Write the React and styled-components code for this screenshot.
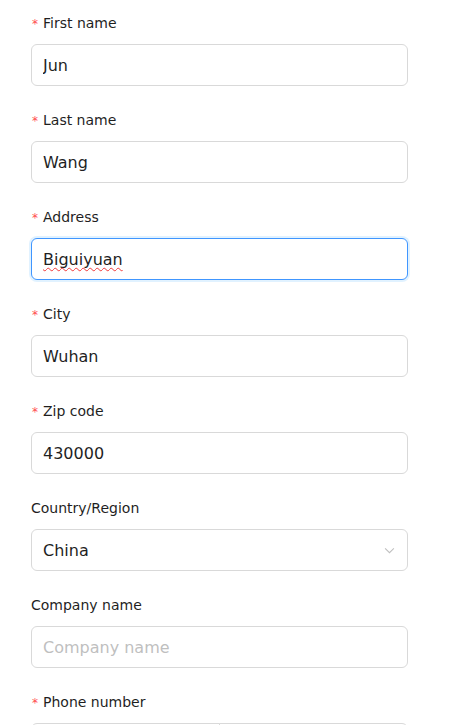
import React from "react";
import styled, { createGlobalStyle } from "styled-components";

const GlobalStyle = createGlobalStyle`
  html, body {
    margin: 0;
    padding: 0;
    background: #fff;
  }
  body {
    font-family: "DejaVu Sans", "Open Sans", sans-serif;
  }
`;

const fields = [
  { name: "firstName", label: "First name", value: "Jun", required: true },
  { name: "lastName", label: "Last name", value: "Wang", required: true },
  { name: "address", label: "Address", value: "Biguiyuan", required: true, focused: true },
  { name: "city", label: "City", value: "Wuhan", required: true },
  { name: "zip", label: "Zip code", value: "430000", required: true },
];

export default function App() {
  return (
    <Page>
      <GlobalStyle />
      <Form onSubmit={(e) => e.preventDefault()}>
        {fields.map((f) => (
          <Field key={f.name}>
            <Label htmlFor={f.name} $required={f.required}>
              {f.label}
            </Label>
            <InputWrap>
              <Input id={f.name} defaultValue={f.value} $focused={f.focused} />
              {/* spellcheck squiggle */}
              {f.focused && <Squiggle aria-hidden="true">{f.value}</Squiggle>}
            </InputWrap>
          </Field>
        ))}

        <Field>
          <Label>Country/Region</Label>
          <Select>
            <span>China</span>
            <Chevron viewBox="0 0 12 8">
              <path d="M1 1.5 L6 6.5 L11 1.5" />
            </Chevron>
          </Select>
        </Field>

        <Field>
          <Label htmlFor="company">Company name</Label>
          <Input id="company" placeholder="Company name" />
        </Field>

        <Field>
          <Label htmlFor="phone" $required>
            Phone number
          </Label>
          <PhoneGroup>
            <PhoneCode />
            <PhoneInput id="phone" />
          </PhoneGroup>
        </Field>
      </Form>
    </Page>
  );
}

const Page = styled.div`
  padding: 12px 0 40px 31px;
  width: 377px;
`;

const Form = styled.form`
  display: flex;
  flex-direction: column;
  gap: 23px;
`;

const Field = styled.div`
  display: flex;
  flex-direction: column;
  gap: 10px;
`;

const Label = styled.label`
  display: flex;
  align-items: center;
  height: 22px;
  font-size: 14px;
  color: #1f1f1f;
  &::before {
    content: ${(p) => (p.$required ? '"*"' : "none")};
    color: #ff4d4f;
    font-size: 12px;
    margin: 2px 5px 0 1px;
  }
`;

const InputWrap = styled.div`
  position: relative;
`;

const Input = styled.input`
  box-sizing: border-box;
  display: block;
  width: 100%;
  height: 42px;
  padding: 0 11px;
  font-family: inherit;
  font-size: 16px;
  color: #1f1f1f;
  background: #fff;
  border: 1px solid ${(p) => (p.$focused ? "#4096ff" : "#d9d9d9")};
  border-radius: 6px;
  box-shadow: ${(p) => (p.$focused ? "0 0 0 2px rgba(5, 145, 255, 0.12)" : "none")};
  outline: none;
  &::placeholder {
    color: #bfbfbf;
  }
`;

const Squiggle = styled.span`
  position: absolute;
  left: 12px;
  top: 0;
  line-height: 42px;
  font-size: 16px;
  color: transparent;
  pointer-events: none;
  text-decoration: underline wavy #f03a3a;
  text-decoration-thickness: 1px;
  text-underline-offset: 3px;
`;

const Select = styled.div`
  box-sizing: border-box;
  display: flex;
  align-items: center;
  justify-content: space-between;
  height: 42px;
  padding: 0 12px 0 11px;
  font-size: 16px;
  color: #1f1f1f;
  border: 1px solid #d9d9d9;
  border-radius: 6px;
`;

const Chevron = styled.svg`
  width: 11px;
  height: 7px;
  fill: none;
  stroke: #bfbfbf;
  stroke-width: 1.2;
`;

const PhoneGroup = styled.div`
  display: flex;
  height: 42px;
`;

const PhoneCode = styled.div`
  box-sizing: border-box;
  flex: 0 0 189px;
  border: 1px solid #d9d9d9;
  border-radius: 6px 0 0 6px;
`;

const PhoneInput = styled.input`
  box-sizing: border-box;
  flex: 1;
  min-width: 0;
  height: 42px;
  margin-left: -1px;
  padding: 0 11px;
  font-family: inherit;
  font-size: 16px;
  border: 1px solid #d9d9d9;
  border-radius: 0 6px 6px 0;
  outline: none;
`;
